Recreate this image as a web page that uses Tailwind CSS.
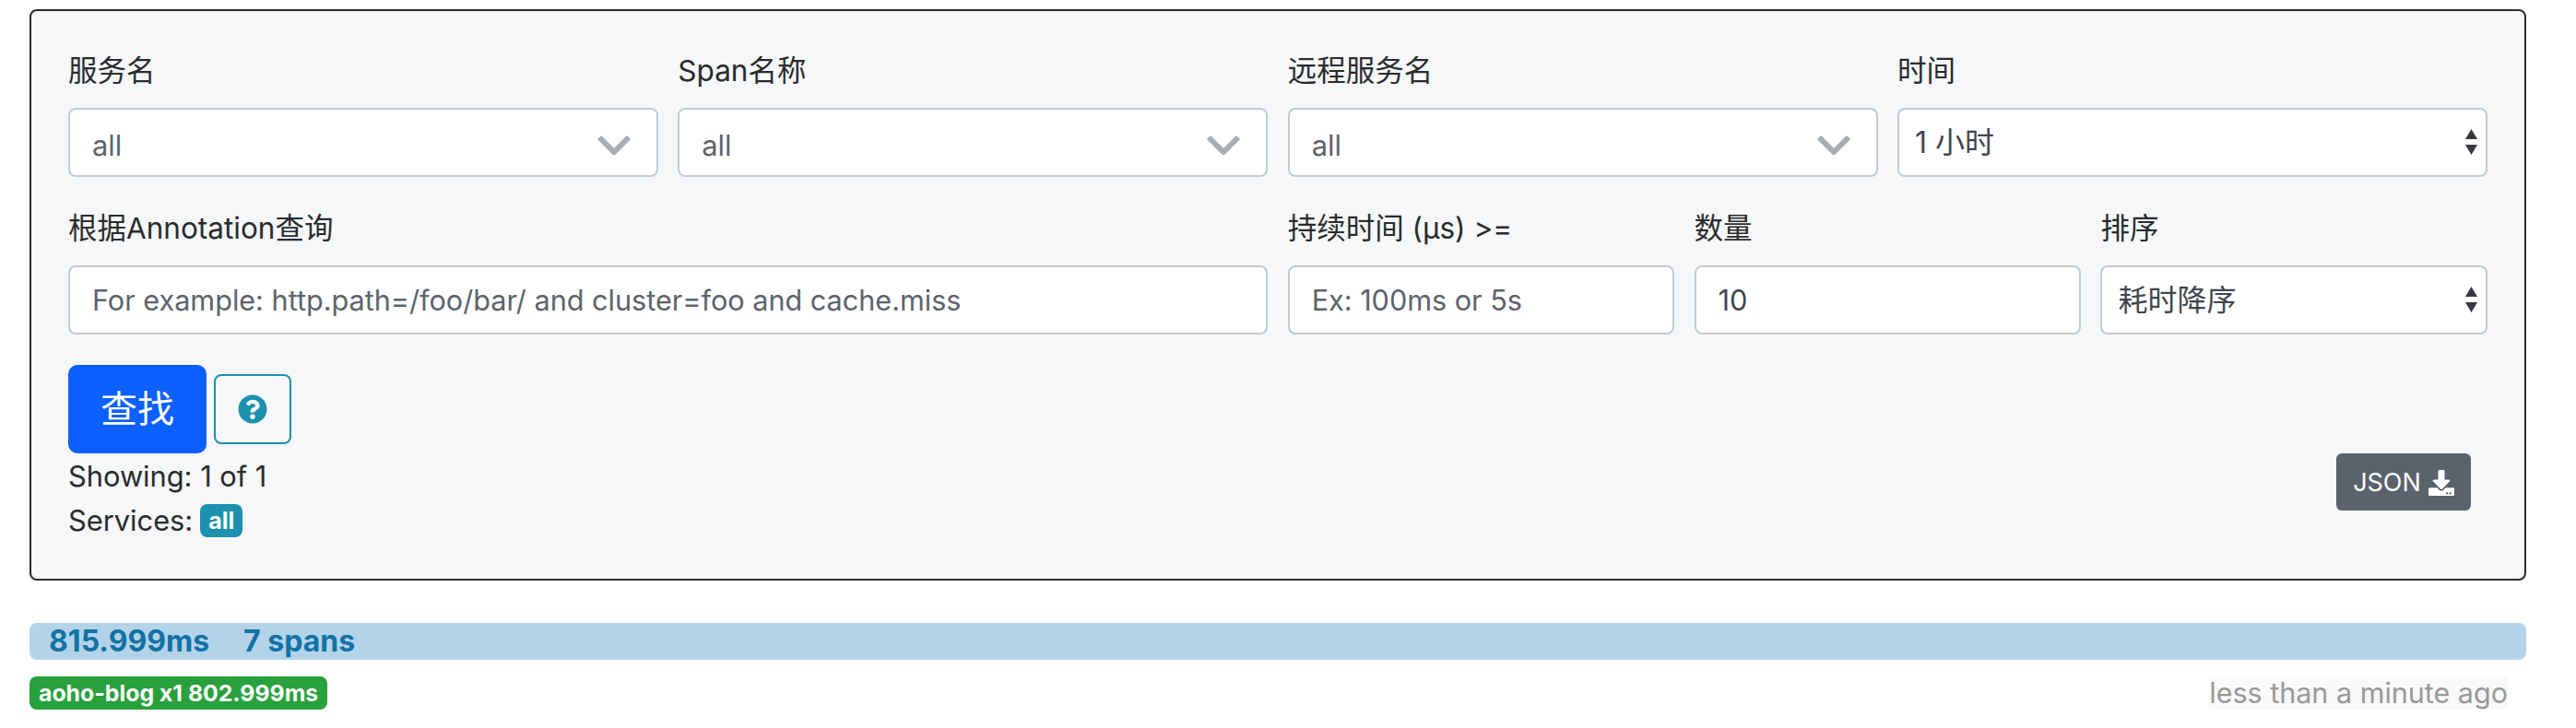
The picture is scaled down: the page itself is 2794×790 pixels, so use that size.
<!DOCTYPE html>
<html lang="zh-CN">
<head>
    <meta charset="UTF-8">
    <title>Zipkin - Search</title>
    <script src="https://cdn.jsdelivr.net/npm/@tailwindcss/browser@4"></script>
</head>
<body class="bg-white font-['Inter','Noto_Sans_CJK_SC',sans-serif] text-[30.8px] text-[#292b2c]">
<div class="px-[32px] pt-[10px] w-[2772px]">

    <!-- Search form -->
    <form class="h-[620px] border-2 border-[#292b2c] rounded-[8px] bg-[#f5f7f9] pt-[41px] pl-[40px] pr-[40px]">
        <div class="grid grid-cols-12 gap-x-[21.33px] gap-y-[32px]">
            <div class="col-span-3">
                <label class="block h-[48px] leading-[48px] mb-[16px] text-[31.5px]">服务名</label>
                <div class="relative">
                    <input value="all" class="w-full h-[75px] pt-[6px] px-[24px] bg-white border-2 border-[#c3cad1] rounded-[8px] text-[#5c646c] outline-none">
                    <svg class="absolute right-[30px] top-[29px] w-[36px] h-[22px] text-[#a6adb5]" viewBox="0 0 36 22" fill="none" stroke="currentColor" stroke-width="6"><path d="M2 3l16 16L34 3"/></svg>
                </div>
            </div>
            <div class="col-span-3">
                <label class="block h-[48px] leading-[48px] mb-[16px] text-[31.5px]">Span名称</label>
                <div class="relative">
                    <input value="all" class="w-full h-[75px] pt-[6px] px-[24px] bg-white border-2 border-[#c3cad1] rounded-[8px] text-[#5c646c] outline-none">
                    <svg class="absolute right-[30px] top-[29px] w-[36px] h-[22px] text-[#a6adb5]" viewBox="0 0 36 22" fill="none" stroke="currentColor" stroke-width="6"><path d="M2 3l16 16L34 3"/></svg>
                </div>
            </div>
            <div class="col-span-3">
                <label class="block h-[48px] leading-[48px] mb-[16px] text-[31.5px]">远程服务名</label>
                <div class="relative">
                    <input value="all" class="w-full h-[75px] pt-[6px] px-[24px] bg-white border-2 border-[#c3cad1] rounded-[8px] text-[#5c646c] outline-none">
                    <svg class="absolute right-[30px] top-[29px] w-[36px] h-[22px] text-[#a6adb5]" viewBox="0 0 36 22" fill="none" stroke="currentColor" stroke-width="6"><path d="M2 3l16 16L34 3"/></svg>
                </div>
            </div>
            <div class="col-span-3">
                <label class="block h-[48px] leading-[48px] mb-[16px] text-[31.5px]">时间</label>
                <div class="relative">
                    <select class="appearance-none w-full h-[75px] px-[17px] bg-white border-2 border-[#c3cad1] rounded-[8px] text-[32px] text-[#3f464d] outline-none">
                        <option>1 小时</option>
                    </select>
                    <svg class="absolute right-[11px] top-[23px] w-[13px] h-[29px] text-[#343a40]" viewBox="0 0 13 29" fill="currentColor"><path d="M6.5 0L13 11H0zM0 17h13L6.5 28z"/></svg>
                </div>
            </div>

            <div class="col-span-6">
                <label class="block h-[48px] leading-[48px] mb-[16px] text-[31.5px]">根据Annotation查询</label>
                <input placeholder="For example: http.path=/foo/bar/ and cluster=foo and cache.miss" class="w-full h-[75px] px-[24px] bg-white border-2 border-[#c3cad1] rounded-[8px] text-[30.6px] placeholder:text-[#5c646c] outline-none">
            </div>
            <div class="col-span-2">
                <label class="block h-[48px] leading-[48px] mb-[16px] text-[31.5px]">持续时间 (μs) &gt;=</label>
                <input placeholder="Ex: 100ms or 5s" class="w-full h-[75px] px-[24px] bg-white border-2 border-[#c3cad1] rounded-[8px] text-[30.6px] placeholder:text-[#5c646c] outline-none">
            </div>
            <div class="col-span-2">
                <label class="block h-[48px] leading-[48px] mb-[16px] text-[31.5px]">数量</label>
                <input value="10" class="w-full h-[75px] px-[24px] bg-white border-2 border-[#c3cad1] rounded-[8px] text-[#3f464d] outline-none">
            </div>
            <div class="col-span-2">
                <label class="block h-[48px] leading-[48px] mb-[16px] text-[31.5px]">排序</label>
                <div class="relative">
                    <select class="appearance-none w-full h-[75px] px-[17px] bg-white border-2 border-[#c3cad1] rounded-[8px] text-[32px] text-[#3f464d] outline-none">
                        <option>耗时降序</option>
                    </select>
                    <svg class="absolute right-[11px] top-[23px] w-[13px] h-[29px] text-[#343a40]" viewBox="0 0 13 29" fill="currentColor"><path d="M6.5 0L13 11H0zM0 17h13L6.5 28z"/></svg>
                </div>
            </div>
        </div>

        <div class="flex justify-between mt-[33px]">
            <div>
                <div class="flex items-center h-[96px]">
                    <button type="button" class="w-[150px] h-[96px] rounded-[10px] bg-[#0b60ff] text-white text-[40px]">查找</button>
                    <button type="button" class="flex items-center justify-center ml-[8px] w-[84px] h-[76px] border-2 border-[#1c91ad] rounded-[8px]">
                        <svg class="w-[32px] h-[32px] text-[#1c91ad]" viewBox="0 0 512 512" fill="currentColor"><path d="M504 256c0 136.997-111.043 248-248 248S8 392.997 8 256C8 119.083 119.043 8 256 8s248 111.083 248 248zM262.655 90c-54.497 0-89.255 22.957-116.549 63.758-3.536 5.286-2.353 12.415 2.715 16.258l34.699 26.31c5.205 3.947 12.621 3.008 16.665-2.122 17.864-22.658 30.113-35.797 57.303-35.797 20.429 0 45.698 13.148 45.698 32.958 0 14.976-12.363 22.667-32.534 33.976C247.128 238.528 216 254.941 216 296v4c0 6.627 5.373 12 12 12h56c6.627 0 12-5.373 12-12v-1.333c0-28.462 83.186-29.647 83.186-106.667 0-58.002-60.165-102-116.531-102zM256 338c-25.365 0-46 20.635-46 46 0 25.364 20.635 46 46 46s46-20.636 46-46c0-25.365-20.635-46-46-46z"/></svg>
                    </button>
                </div>
                <div class="mt-[1px] leading-[48px]">Showing: 1 of 1</div>
                <div class="flex items-center leading-[48px]">
                    Services:
                    <span class="ml-[8px] px-[9px] h-[36px] leading-[36px] rounded-[8px] bg-[#1c91ad] text-white text-[25px] font-bold">all</span>
                </div>
            </div>
            <div class="pt-[96px] pr-[18px]">
                <button type="button" class="flex items-center justify-center gap-[8px] w-[146px] h-[62px] pt-[2px] rounded-[6px] bg-[#5a626b] text-white text-[27px]">
                    JSON
                    <svg class="w-[28px] h-[28px]" viewBox="0 0 512 512" fill="currentColor"><path d="M216 0h80c13.3 0 24 10.7 24 24v168h87.7c17.8 0 26.7 21.5 14.1 34.1L269.7 378.3c-7.5 7.5-19.8 7.5-27.3 0L90.1 226.1c-12.6-12.6-3.7-34.1 14.1-34.1H192V24c0-13.3 10.7-24 24-24zm296 376v112c0 13.3-10.7 24-24 24H24c-13.3 0-24-10.7-24-24V376c0-13.3 10.7-24 24-24h146.7l49 49c20.1 20.1 52.5 20.1 72.6 0l49-49H488c13.3 0 24 10.7 24 24zm-124 88c0-11-9-20-20-20s-20 9-20 20 9 20 20 20 20-9 20-20zm64 0c0-11-9-20-20-20s-20 9-20 20 9 20 20 20 20-9 20-20z"/></svg>
                </button>
            </div>
        </div>
    </form>

    <!-- Trace result -->
    <div class="mt-[46px] h-[40px] w-[2708px] rounded-[8px] bg-[#b3d4e8] pl-[21px] flex items-center gap-[37px] text-[#1272a6] text-[32px] font-bold">
        <span>815.999ms</span>
        <span>7 spans</span>
    </div>
    <div class="flex justify-between items-center w-[2708px] mt-[18px]">
        <span class="h-[36px] leading-[36px] px-[10px] rounded-[8px] bg-[#28a03c] text-white text-[24.8px] font-bold">aoho-blog x1 802.999ms</span>
        <span class="mr-[20px] h-[36px] leading-[36px] bg-[#f9f9f9] text-[30.5px] text-[#999999]">less than a minute ago</span>
    </div>
</div>
</body>
</html>
